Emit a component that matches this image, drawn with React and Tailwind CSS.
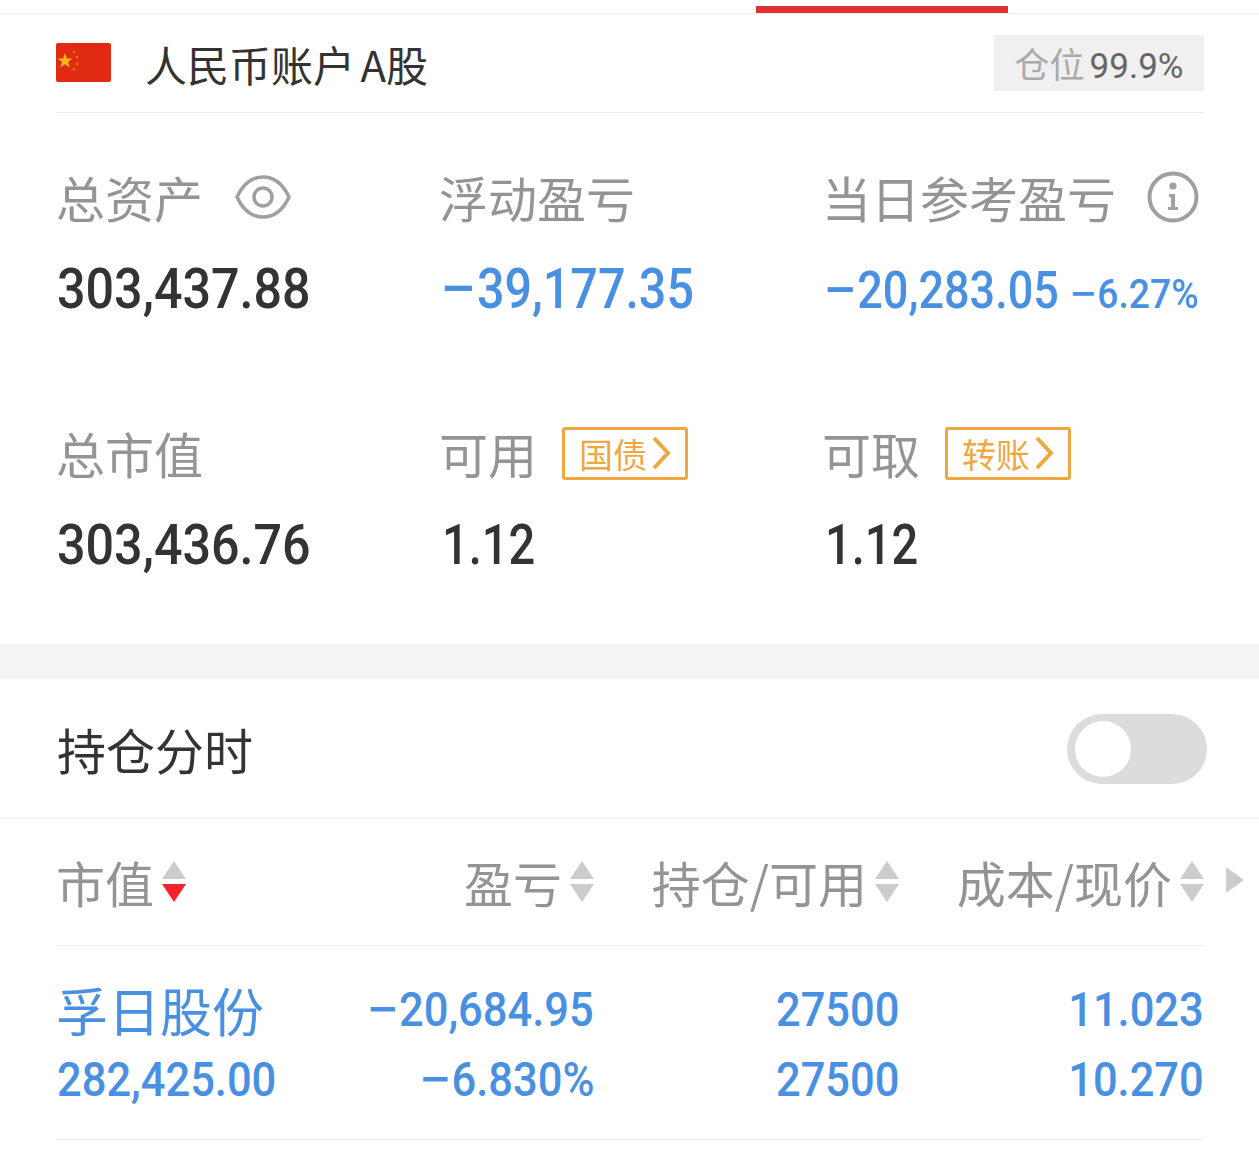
const cjk = "font-['Noto_Sans_CJK_SC',sans-serif]";

function Flag() {
  return (
    <svg width="55" height="39" viewBox="0 0 55 39" className="block -mt-[2px]">
      <rect width="55" height="39" rx="2" fill="#e12a12" />
      <path d="M9 10l1.9 5.4 5.6.1-4.5 3.4 1.7 5.5L9 21.2l-4.7 3.2L6 18.9l-4.5-3.4 5.6-.1z" fill="#f5b914" />
      <circle cx="18" cy="9" r="1.3" fill="#ea7a1c" />
      <circle cx="21" cy="14" r="1.3" fill="#ea7a1c" />
      <circle cx="21" cy="21" r="1.3" fill="#ea7a1c" />
      <circle cx="18" cy="26" r="1.3" fill="#ea7a1c" />
    </svg>
  );
}

function Eye() {
  return (
    <svg width="56" height="44" viewBox="0 0 56 44" fill="none" stroke="#a0a0a0" strokeWidth="3.5" className="block">
      <path d="M2 22C8 9 17 2 28 2s20 7 26 20c-6 13-15 20-26 20S8 35 2 22z" />
      <circle cx="28" cy="22" r="9" />
    </svg>
  );
}

function Info() {
  return (
    <svg width="52" height="52" viewBox="0 0 52 52" className="block">
      <circle cx="26" cy="26" r="23.5" fill="none" stroke="#a0a0a0" strokeWidth="4" />
      <circle cx="26" cy="15" r="3.6" fill="#a0a0a0" />
      <path d="M22 23h6v13h3v3H21v-3h3V26h-2z" fill="#a0a0a0" />
    </svg>
  );
}

// sort arrows beside the table heads, down arrow goes red on the active column
function Sort({ active }) {
  return (
    <svg width="24" height="42" viewBox="0 0 24 42" className="block ml-[8px] shrink-0">
      <path d="M12 0l12 18H0z" fill="#cccccc" />
      <path d="M12 41L0 23h24z" fill={active ? "#f5222d" : "#cccccc"} />
    </svg>
  );
}

function Chevron({ color }) {
  return (
    <svg width="20" height="36" viewBox="0 0 20 36" fill="none" stroke={color} strokeWidth="4" className="block ml-[4px]">
      <path d="M3 3l14 15L3 33" />
    </svg>
  );
}

// the digits in the picture are a narrow DIN style face, so squeeze Roboto
function Num({ children, className = "" }) {
  return (
    <span className={`inline-block whitespace-nowrap font-['Roboto',sans-serif] ${className}`}>
      {children}
    </span>
  );
}

function Minus() {
  return <span className="inline-block origin-left scale-x-[1.35] mr-[0.2em]">−</span>;
}

function Stat({ label, extra, value, color = "text-[#333333]", side, squeeze = "scale-x-[0.897]" }) {
  return (
    <div>
      <div className={`flex items-center h-[66px] text-[49px] text-[#949494] ${cjk}`}>
        <span>{label}</span>
        {extra}
      </div>
      <div className="flex items-baseline h-[66px] mt-[26px] pl-[1px]">
        <Num className={`origin-left text-[56px] leading-[66px] font-medium ${squeeze} ${color}`}>{value}</Num>
        {side}
      </div>
    </div>
  );
}

function Tag({ text }) {
  return (
    <div className={`flex items-center justify-center ml-[25px] w-[126px] h-[53px] border-[3px] border-[#eea83f] rounded-[3px] text-[34px] text-[#eea83f] ${cjk}`}>
      <span>{text}</span>
      <Chevron color="#eea83f" />
    </div>
  );
}

function Head({ label, active, className = "" }) {
  return (
    <div className={`flex items-center ${className}`}>
      <span className="whitespace-nowrap">{label}</span>
      <Sort active={active} />
    </div>
  );
}

function Cell({ children }) {
  return (
    <div className="h-[70px] text-right leading-[70px]">
      <Num className="origin-right text-[48px] font-medium scale-x-[0.905]">{children}</Num>
    </div>
  );
}

export default function App() {
  const blue = "text-[#4a90e2]";
  return (
    <div className="w-[1259px] h-[1163px] bg-white overflow-hidden">
      <div className="h-[14px] pt-[6px] border-b border-[#eeeeee]">
        <div className="w-[252px] h-[7px] ml-[756px] bg-[#de3232]" />
      </div>

      <div className="pl-[56px] pr-[55px]">
        <div className="flex items-center justify-between h-[99px] border-b border-[#eeeeee]">
          <div className="flex items-center">
            <Flag />
            <span className={`ml-[34px] text-[42px] text-[#333333] [word-spacing:-4px] ${cjk}`}>人民币账户 A股</span>
          </div>
          <div className={`flex items-baseline justify-center w-[210px] h-[56px] leading-[56px] bg-[#f0f0f0] text-[35px] ${cjk}`}>
            <span className="text-[#aaaaaa]">仓位</span>
            <span className="ml-[5px] text-[#666666] font-['Roboto',sans-serif]">99.9%</span>
          </div>
        </div>

        <div className="grid grid-cols-3 gap-y-[98px] pt-[51px] w-[1149px]">
          <Stat label="总资产" extra={<span className="ml-[32px]"><Eye /></span>} value="303,437.88" />
          <Stat label="浮动盈亏" value={<><Minus />39,177.35</>} color={blue} squeeze="scale-x-[0.865]" />
          <Stat
            label="当日参考盈亏"
            extra={<span className="ml-[31px]"><Info /></span>}
            value={<span className="text-[52px]"><Minus />20,283.05</span>}
            color={blue}
            squeeze="scale-x-[0.865]"
            side={
              <Num className={`origin-left text-[40px] -ml-[27px] font-medium scale-x-[0.93] ${blue}`}>
                <Minus />6.27%
              </Num>
            }
          />
          <Stat label="总市值" value="303,436.76" />
          <Stat label="可用" extra={<Tag text="国债" />} value="1.12" squeeze="scale-x-[0.84] ml-[2px]" />
          <Stat label="可取" extra={<Tag text="转账" />} value="1.12" squeeze="scale-x-[0.84] ml-[2px]" />
        </div>
      </div>

      <div className="h-[35px] mt-[66px] bg-[#f5f5f5]" />

      <div className="flex items-center justify-between h-[140px] pl-[57px] pr-[52px] border-b border-[#eeeeee]">
        <span className={`text-[49px] text-[#333333] ${cjk}`}>持仓分时</span>
        <div className="flex items-center w-[140px] h-[70px] mt-[1px] pl-[8px] rounded-full bg-[#dcdcdc]">
          <div className="w-[56px] h-[56px] rounded-full bg-white" />
        </div>
      </div>

      <div className="flex items-center pl-[56px]">
        <div className={`grid grid-cols-[220px_318px_305px_305px] items-center w-[1148px] h-[127px] border-b border-[#eeeeee] text-[49px] text-[#949494] ${cjk}`}>
          <Head label="市值" active />
          <Head label="盈亏" className="justify-end" />
          <Head label="持仓/可用" className="justify-end" />
          <Head label="成本/现价" className="justify-end" />
        </div>
        <svg width="18" height="26" viewBox="0 0 18 26" className="block ml-[22px] -mt-[6px]">
          <path d="M0 0l18 13L0 26z" fill="#cccccc" />
        </svg>
      </div>

      <div className="ml-[56px] w-[1148px] h-[194px] border-b border-[#eeeeee] pt-[29px]">
        <div className={`grid grid-cols-[220px_318px_305px_305px] ${blue}`}>
          <div className={`h-[70px] text-[52px] leading-[70px] whitespace-nowrap ${cjk}`}>孚日股份</div>
          <Cell><Minus />20,684.95</Cell>
          <Cell>27500</Cell>
          <Cell>11.023</Cell>
          <div className="h-[70px] pl-[1px] leading-[70px]">
            <Num className="origin-left text-[48px] font-medium scale-x-[0.905]">282,425.00</Num>
          </div>
          <Cell><Minus />6.830%</Cell>
          <Cell>27500</Cell>
          <Cell>10.270</Cell>
        </div>
      </div>
    </div>
  );
}
